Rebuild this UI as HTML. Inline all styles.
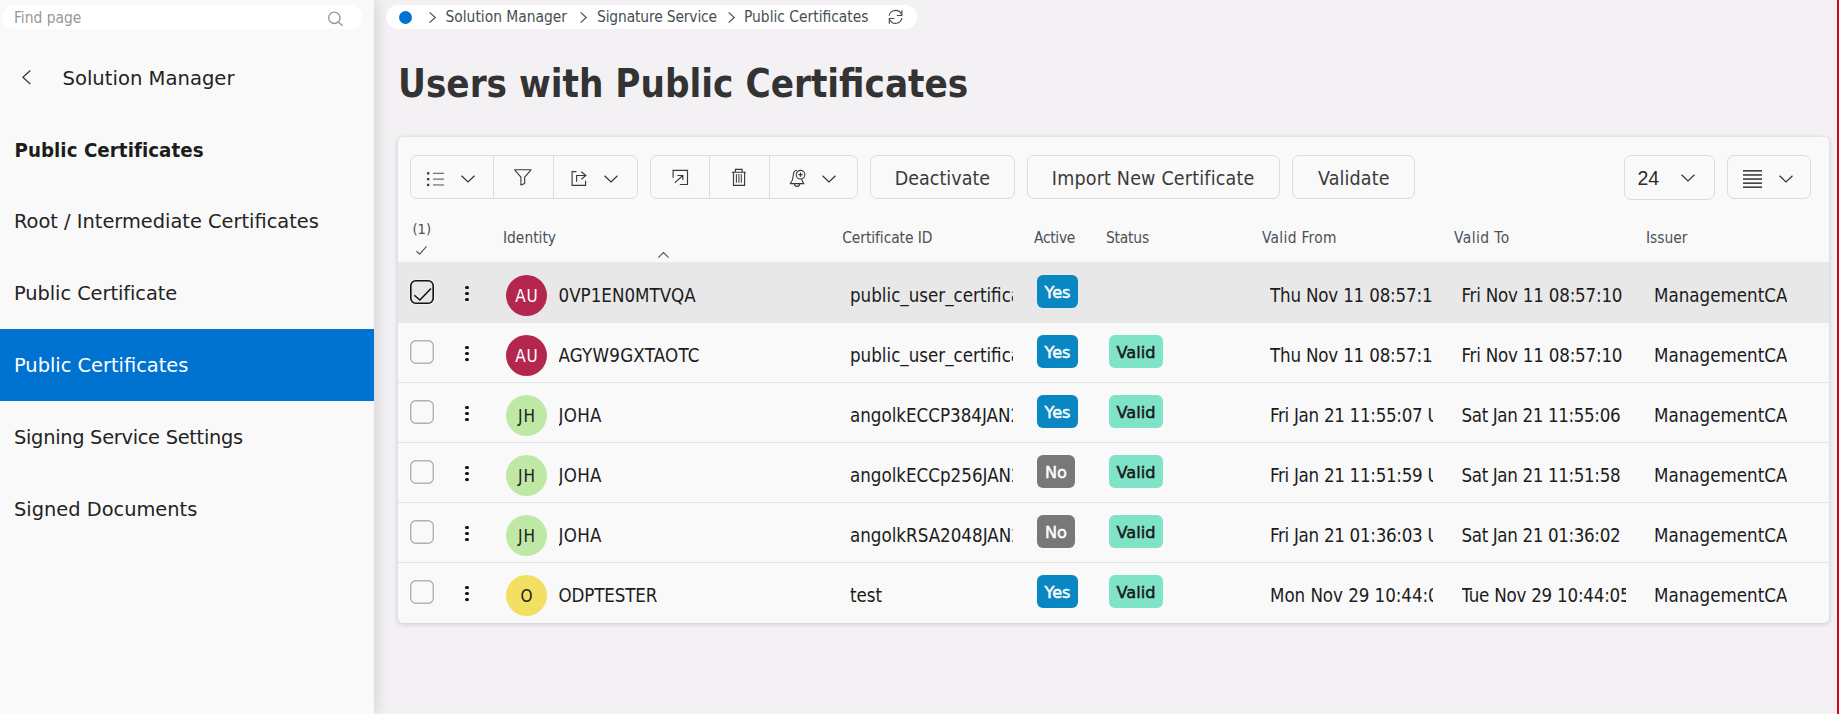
<!DOCTYPE html>
<html lang="en">
<head>
<meta charset="utf-8">
<title>Users with Public Certificates</title>
<style>
*{box-sizing:border-box;margin:0;padding:0}
html,body{width:1839px;height:714px;overflow:hidden}
body{position:relative;background:#f3f1f4;font-family:"DejaVu Sans Condensed","Liberation Sans",sans-serif;color:#1f1f1f}
.abs{position:absolute}
.t{position:absolute;white-space:nowrap;line-height:1}
svg{position:absolute;overflow:visible}
#side{position:absolute;left:0;top:0;width:374px;height:714px;background:#f9f9f9;box-shadow:1px 0 14px rgba(30,25,35,.17)}
#search{position:absolute;left:2px;top:5px;width:360px;height:24px;border-radius:12px;background:#fff}
.nav{position:absolute;left:0;width:374px;height:72px}
.nav .t{left:14px;top:27px;font-family:"DejaVu Sans","Liberation Sans",sans-serif;font-size:19.4px;color:#232323}
.nav.act{background:#0073d1}
.nav.act .t{color:#fff}
#redline{position:absolute;left:1837px;top:0;width:2px;height:714px;background:#d0041d}
#crumb{position:absolute;left:386px;top:5px;width:531px;height:24px;border-radius:12px;background:#fff}
#crumb .t{font-size:15.4px;color:#474f54;top:5px}
#title{left:398px;top:65px;font-size:38.2px;font-weight:bold;color:#333}
#card{position:absolute;left:398px;top:137px;width:1431px;height:486px;background:#f9f9f9;border-radius:5px;box-shadow:0 1px 5px rgba(30,25,35,.2)}
.grp{position:absolute;top:18px;height:44px;border:1px solid #dcdcdc;border-radius:7px}
.grp i{position:absolute;top:0;width:1px;height:42px;background:#dcdcdc}
.btn{position:absolute;top:18px;height:44px;border:1px solid #dcdcdc;border-radius:7px}
.btn .t{font-size:19.5px;color:#3a3a3a;top:13px}
.hd{position:absolute;top:94px;font-size:15.4px;color:#4b5158;line-height:1;white-space:nowrap}
.row{position:absolute;left:0;width:1431px;height:60px;border-bottom:1px solid #e3e3e3}
.row.last{border-bottom:none;border-radius:0 0 5px 5px}
.row.sel{background:#e8e8e8;border-bottom-color:#e8e8e8;box-shadow:0 -1px 0 #e8e8e8}
.cb{position:absolute;left:12px;top:17px;width:24px;height:24px;border-radius:5.500px;box-shadow:0 0 0 1px rgba(255,255,255,.45)}
.dots{position:absolute;left:67.300px;top:22.700px;width:3.300px}
.dots b{display:block;width:3.300px;height:3.300px;border-radius:2px;background:#111;margin-bottom:2.800px}
.av{position:absolute;left:108px;top:12px;width:41px;height:41px;border-radius:50%}
.av .t{font-size:17px;top:13px;left:0;width:41px;text-align:center;letter-spacing:.9px;text-indent:.9px}
.c{position:absolute;top:22px;font-size:18.6px;line-height:1.2;white-space:nowrap;color:#1c1c1c;overflow:hidden}
.bdg{position:absolute;top:12px;height:33px;border-radius:6px}
.bdg .t{font-family:"DejaVu Sans","Liberation Sans",sans-serif;font-size:16.2px;-webkit-text-stroke:.45px currentColor;top:10px;left:0;width:100%;text-align:center}
.yes{left:639px;width:41px;background:#0887c3;color:#fff}
.no{left:639px;width:38px;background:#787878;color:#fff}
.valid{left:711px;width:54px;background:#7fe3c8;color:#181818}
</style>
</head>
<body>

<div id="side">
  <div id="search"><span class="t m" id="find" style="left:12px;top:6px;font-size:15.4px;color:#979797">Find page</span>
    <svg style="left:325.500px;top:7px" width="15" height="14" viewBox="0 0 15 14" fill="none" stroke="#989898" stroke-width="1.4"><circle cx="6.35" cy="5.8" r="5.7"/><path d="M10.4 9.900l4.2 3.8"/></svg>
  </div>
  <svg style="left:21.500px;top:69.500px" width="9" height="15" viewBox="0 0 9 15" fill="none" stroke="#3a3a3a" stroke-width="1.3"><path d="M8.3.500L.9 7.300l7.4 6.8"/></svg>
  <span class="t m" id="sm" style="left:62.500px;top:69px;font-family:'DejaVu Sans','Liberation Sans',sans-serif;font-size:19.6px;color:#232323">Solution Manager</span>
  <span class="t m" id="pcb" style="left:14.500px;top:140px;font-size:20.3px;font-weight:bold;color:#1c1c1c;letter-spacing:.05px">Public Certificates</span>
  <div class="nav" style="top:185px"><span class="t m" id="n1">Root / Intermediate Certificates</span></div>
  <div class="nav" style="top:257px"><span class="t m" id="n2" style="letter-spacing:-.06px">Public Certificate</span></div>
  <div class="nav act" style="top:329px"><span class="t m" id="n3">Public Certificates</span></div>
  <div class="nav" style="top:401px"><span class="t m" id="n4" style="letter-spacing:-.29px">Signing Service Settings</span></div>
  <div class="nav" style="top:473px"><span class="t m" id="n5">Signed Documents</span></div>
</div>


<div id="crumb">
  <div class="abs" style="left:13px;top:6px;width:13px;height:13px;border-radius:50%;background:#0073d1"></div>
  <svg style="left:43px;top:7px" width="7" height="11" viewBox="0 0 7 11" fill="none" stroke="#4a4f54" stroke-width="1.2"><path d="M.6.400l5.6 5.1-5.6 5.1"/></svg>
  <span class="t m" id="b1" style="left:59.500px">Solution Manager</span>
  <svg style="left:194px;top:7px" width="7" height="11" viewBox="0 0 7 11" fill="none" stroke="#4a4f54" stroke-width="1.2"><path d="M.6.400l5.6 5.1-5.6 5.1"/></svg>
  <span class="t m" id="b2" style="left:211px;letter-spacing:-.14px">Signature Service</span>
  <svg style="left:341.5px;top:7px" width="7" height="11" viewBox="0 0 7 11" fill="none" stroke="#4a4f54" stroke-width="1.2"><path d="M.6.400l5.6 5.1-5.6 5.1"/></svg>
  <span class="t m" id="b3" style="left:358px">Public Certificates</span>
  <svg style="left:502px;top:5px" width="15" height="14" viewBox="0 0 15 14" fill="none" stroke="#454c52" stroke-width="1.15"><path d="M1.1 5.700A6.5 6.5 0 0 1 13.5 4.500M14 8.200A6.5 6.5 0 0 1 1.8 9.7"/><path d="M13.9.2v5.300H8.800M1.3 13.800V8.500h5"/></svg>
</div>
<span class="t m" id="title">Users with Public Certificates</span>

<div id="card">

  <div class="grp" style="left:12px;width:228px"><i style="left:82px"></i><i style="left:142px"></i></div>
  <div class="grp" style="left:252px;width:208px"><i style="left:58px"></i><i style="left:118px"></i></div>
  
  <!-- list icon -->
  <svg style="left:29px;top:35px" width="18" height="15" viewBox="0 0 18 15" fill="#3a3a3a"><rect x="0" y=".2" width="2.3" height="2.3"/><rect x="0" y="6" width="2.3" height="2.3"/><rect x="0" y="11.8" width="2.3" height="2.3"/><rect x="6" y=".7" width="11" height="1.3" fill="#777"/><rect x="6" y="6.5" width="11" height="1.3" fill="#777"/><rect x="6" y="12.3" width="11" height="1.3" fill="#777"/></svg>
  <svg style="left:63.4px;top:37.6px" width="14" height="8" viewBox="0 0 14 8" fill="none" stroke="#333" stroke-width="1.2"><path d="M.5.700l6.5 6.300L13.5.70"/></svg>
  <!-- filter -->
  <svg style="left:116px;top:32px" width="18" height="17" viewBox="0 0 18 17" fill="none" stroke="#3a3a3a" stroke-width="1.1" stroke-linejoin="round"><path d="M.7.800H17l-6.3 7.400v6.200L6.9 16V8.200z"/></svg>
  <!-- export -->
  <svg style="left:173px;top:33px" width="16" height="16" viewBox="0 0 16 16" fill="none" stroke="#3a3a3a" stroke-width="1.15"><path d="M5.4 1.600H1.100v13.700h13.500v-4.5"/><path d="M5.6 11.700V5.500h9.300M10.3 1.700l4.6 3.8-4.6 3.8"/></svg>
  <svg style="left:206px;top:37.6px" width="14" height="8" viewBox="0 0 14 8" fill="none" stroke="#333" stroke-width="1.2"><path d="M.5.700l6.5 6.300L13.5.70"/></svg>
  <!-- open -->
  <svg style="left:274px;top:32px" width="17" height="17" viewBox="0 0 17 17" fill="none" stroke="#3a3a3a" stroke-width="1.15"><path d="M1.1 8.700V1.400h14.400v14.100H7.8"/><path d="M3 13.600l7.8-7.100M5.4 6.500h5.400v4.6"/></svg>
  <!-- trash -->
  <svg style="left:333px;top:31px" width="16" height="18" viewBox="0 0 16 18" fill="none" stroke="#3a3a3a" stroke-width="1.15"><path d="M.8 4.200h14.100M4.4 4V1.300h6.700V4M2.5 4.400v12.900h11.100V4.4"/><path d="M5.4 6.100v8.700M7.9 6.100v8.700M10.3 6.100v8.7" stroke-width="1"/></svg>
  <!-- bell -->
  <svg style="left:391px;top:32px" width="17" height="19" viewBox="0 0 17 19" fill="none" stroke="#3a3a3a" stroke-width="1.1" stroke-linejoin="round"><path d="M8 1.300C5.5 1.5 4.4 3.2 4.3 6.200c-.1 3.3-1 5.9-3 8.450h13.500c-1-1.4-1.7-2.9-2.2-4.600M5.3 14.900c.4 3.3 5.1 3.3 5.5 0"/><circle cx="11.5" cy="5.7" r="4.3"/><path d="M11.5 3.600v4.200M9.4 5.700h4.2" stroke-width="1.3"/></svg>
  <svg style="left:424px;top:37.6px" width="14" height="8" viewBox="0 0 14 8" fill="none" stroke="#333" stroke-width="1.2"><path d="M.5.700l6.5 6.300L13.5.70"/></svg>

  <div class="btn" style="left:472px;width:145px"><span class="t m" id="bt1" style="left:23.800px">Deactivate</span></div>
  <div class="btn" style="left:629px;width:253px"><span class="t m" id="bt2" style="left:23.800px;letter-spacing:.18px">Import New Certificate</span></div>
  <div class="btn" style="left:894px;width:123px"><span class="t m" id="bt3" style="left:25px;letter-spacing:.15px">Validate</span></div>
  <div class="btn" style="left:1226px;width:91px;height:45px"><span class="t m" id="bt4" style="left:12.500px;top:13px;font-family:'Liberation Sans',sans-serif;font-size:19.5px;color:#2a2a2a">24</span></div>
  <svg style="left:1283px;top:36.6px" width="14" height="8" viewBox="0 0 14 8" fill="none" stroke="#333" stroke-width="1.2"><path d="M.5.700l6.5 6.300L13.5.70"/></svg>
  <div class="btn" style="left:1329px;width:84px"></div>
  <svg style="left:1345px;top:33px" width="19" height="18" viewBox="0 0 19 18" fill="#151515"><rect y=".2" width="19" height="1.3"/><rect y="4.3" width="19" height="1.3"/><rect y="8.4" width="19" height="1.3"/><rect y="12.5" width="19" height="1.3"/><rect y="16.5" width="19" height="1.3"/></svg>
  <svg style="left:1380.5px;top:37.6px" width="14" height="8" viewBox="0 0 14 8" fill="none" stroke="#333" stroke-width="1.2"><path d="M.5.700l6.5 6.300L13.5.70"/></svg>


  <span class="hd m" id="h0" style="left:14.500px;top:85px;font-size:14.6px">(1)</span>
  <svg style="left:18px;top:108.500px" width="11" height="9" viewBox="0 0 11 9" fill="none" stroke="#4b5158" stroke-width="1.1"><path d="M.4 5.200l3.2 2.900L10.6.4"/></svg>
  <span class="hd m" id="h1" style="left:105px">Identity</span>
  <svg style="left:260px;top:115px" width="11" height="6" viewBox="0 0 11 6" fill="none" stroke="#4b5158" stroke-width="1.1"><path d="M.3 5.700L5.5.600l5.2 5.1"/></svg>
  <span class="hd m" id="h2" style="left:444.200px;letter-spacing:-.06px">Certificate ID</span>
  <span class="hd m" id="h3" style="left:636px;letter-spacing:-.3px">Active</span>
  <span class="hd m" id="h4" style="left:708px;letter-spacing:-.2px">Status</span>
  <span class="hd m" id="h5" style="left:864px;letter-spacing:.3px">Valid From</span>
  <span class="hd m" id="h6" style="left:1056px;letter-spacing:.45px">Valid To</span>
  <span class="hd m" id="h7" style="left:1248px">Issuer</span>


  <div class="row sel" style="top:126px"><div class="cb"><svg style="left:0;top:0" width="24" height="24" viewBox="0 0 24 24" fill="none" stroke="#111" stroke-width="1.6"><rect x=".8" y=".8" width="22.4" height="22.4" rx="5"/><path d="M4.3 15.200l5.6 4.800L21 8.4" stroke-width="1.5"/></svg></div><div class="dots"><b></b><b></b><b></b></div>
    <div class="av" style="background:#b5264f;color:#fff"><span class="t m" id="av0">AU</span></div><span class="c m" id="nm0" style="left:160.500px">0VP1EN0MTVQA</span>
    <span class="c m" id="ce0" style="left:452px;width:163px">public_user_certificate</span><div class="bdg yes"><span class="t m" id="ac0">Yes</span></div>
    <span class="c m" id="vf0" style="left:872px;width:163px;letter-spacing:-0.19px">Thu Nov 11 08:57:10 UTC</span><span class="c m" id="vt0" style="left:1063.500px;width:164.500px;letter-spacing:-0.21px">Fri Nov 11 08:57:10 UTC</span><span class="c m" id="is0" style="left:1256px">ManagementCA</span></div>
  <div class="row" style="top:186px"><div class="cb"><svg style="left:0;top:0" width="24" height="24" viewBox="0 0 24 24" fill="none" stroke="#b2b2b2" stroke-width="1.4"><rect x=".7" y=".7" width="22.6" height="22.6" rx="5"/></svg></div><div class="dots"><b></b><b></b><b></b></div>
    <div class="av" style="background:#b5264f;color:#fff"><span class="t m" id="av1">AU</span></div><span class="c m" id="nm1" style="left:160.500px;letter-spacing:0.22px">AGYW9GXTAOTC</span>
    <span class="c m" id="ce1" style="left:452px;width:163px">public_user_certificate</span><div class="bdg yes"><span class="t m" id="ac1">Yes</span></div><div class="bdg valid"><span class="t m" id="va1">Valid</span></div>
    <span class="c m" id="vf1" style="left:872px;width:163px;letter-spacing:-0.19px">Thu Nov 11 08:57:10 UTC</span><span class="c m" id="vt1" style="left:1063.500px;width:164.500px;letter-spacing:-0.21px">Fri Nov 11 08:57:10 UTC</span><span class="c m" id="is1" style="left:1256px">ManagementCA</span></div>
  <div class="row" style="top:246px"><div class="cb"><svg style="left:0;top:0" width="24" height="24" viewBox="0 0 24 24" fill="none" stroke="#b2b2b2" stroke-width="1.4"><rect x=".7" y=".7" width="22.6" height="22.6" rx="5"/></svg></div><div class="dots"><b></b><b></b><b></b></div>
    <div class="av" style="background:#bfe8a5;color:#222"><span class="t m" id="av2">JH</span></div><span class="c m" id="nm2" style="left:160.500px;letter-spacing:0.3px">JOHA</span>
    <span class="c m" id="ce2" style="left:452px;width:163px">angolkECCP384JAN21</span><div class="bdg yes"><span class="t m" id="ac2">Yes</span></div><div class="bdg valid"><span class="t m" id="va2">Valid</span></div>
    <span class="c m" id="vf2" style="left:872px;width:163px;letter-spacing:-0.29px">Fri Jan 21 11:55:07 UTC</span><span class="c m" id="vt2" style="left:1063.500px;width:164.500px;letter-spacing:-0.36px">Sat Jan 21 11:55:06 UTC</span><span class="c m" id="is2" style="left:1256px">ManagementCA</span></div>
  <div class="row" style="top:306px"><div class="cb"><svg style="left:0;top:0" width="24" height="24" viewBox="0 0 24 24" fill="none" stroke="#b2b2b2" stroke-width="1.4"><rect x=".7" y=".7" width="22.6" height="22.6" rx="5"/></svg></div><div class="dots"><b></b><b></b><b></b></div>
    <div class="av" style="background:#bfe8a5;color:#222"><span class="t m" id="av3">JH</span></div><span class="c m" id="nm3" style="left:160.500px;letter-spacing:0.3px">JOHA</span>
    <span class="c m" id="ce3" style="left:452px;width:163px">angolkECCp256JAN21</span><div class="bdg no"><span class="t m" id="ac3">No</span></div><div class="bdg valid"><span class="t m" id="va3">Valid</span></div>
    <span class="c m" id="vf3" style="left:872px;width:163px;letter-spacing:-0.29px">Fri Jan 21 11:51:59 UTC</span><span class="c m" id="vt3" style="left:1063.500px;width:164.500px;letter-spacing:-0.36px">Sat Jan 21 11:51:58 UTC</span><span class="c m" id="is3" style="left:1256px">ManagementCA</span></div>
  <div class="row" style="top:366px"><div class="cb"><svg style="left:0;top:0" width="24" height="24" viewBox="0 0 24 24" fill="none" stroke="#b2b2b2" stroke-width="1.4"><rect x=".7" y=".7" width="22.6" height="22.6" rx="5"/></svg></div><div class="dots"><b></b><b></b><b></b></div>
    <div class="av" style="background:#bfe8a5;color:#222"><span class="t m" id="av4">JH</span></div><span class="c m" id="nm4" style="left:160.500px;letter-spacing:0.3px">JOHA</span>
    <span class="c m" id="ce4" style="left:452px;width:163px">angolkRSA2048JAN21</span><div class="bdg no"><span class="t m" id="ac4">No</span></div><div class="bdg valid"><span class="t m" id="va4">Valid</span></div>
    <span class="c m" id="vf4" style="left:872px;width:163px;letter-spacing:-0.29px">Fri Jan 21 01:36:03 UTC</span><span class="c m" id="vt4" style="left:1063.500px;width:164.500px;letter-spacing:-0.36px">Sat Jan 21 01:36:02 UTC</span><span class="c m" id="is4" style="left:1256px">ManagementCA</span></div>
  <div class="row last" style="top:426px"><div class="cb"><svg style="left:0;top:0" width="24" height="24" viewBox="0 0 24 24" fill="none" stroke="#b2b2b2" stroke-width="1.4"><rect x=".7" y=".7" width="22.6" height="22.6" rx="5"/></svg></div><div class="dots"><b></b><b></b><b></b></div>
    <div class="av" style="background:#f3df62;color:#222"><span class="t m" id="av5">O</span></div><span class="c m" id="nm5" style="left:160.500px;letter-spacing:-0.13px">ODPTESTER</span>
    <span class="c m" id="ce5" style="left:452px;width:163px">test</span><div class="bdg yes"><span class="t m" id="ac5">Yes</span></div><div class="bdg valid"><span class="t m" id="va5">Valid</span></div>
    <span class="c m" id="vf5" style="left:872px;width:163px;letter-spacing:-0.05px">Mon Nov 29 10:44:05 UTC</span><span class="c m" id="vt5" style="left:1063.500px;width:164.500px;letter-spacing:-0.23px">Tue Nov 29 10:44:05 UTC</span><span class="c m" id="is5" style="left:1256px">ManagementCA</span></div>
</div>
<div id="redline"></div>
</body>
</html>
